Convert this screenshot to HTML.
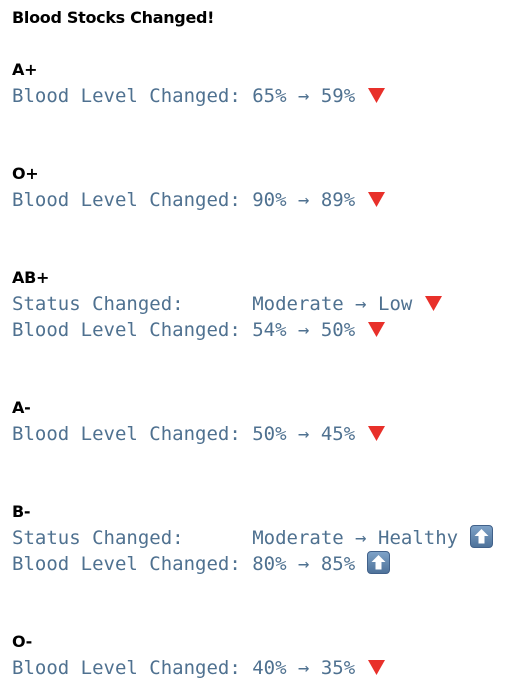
<!DOCTYPE html>
<html><head><style>
body{margin:0;background:#fff;width:512px;height:691px;overflow:hidden}
.w{position:absolute;left:12px;top:5px;line-height:26px}
.h{font-family:"DejaVu Sans","Liberation Sans",sans-serif;font-weight:bold;font-size:16px;color:#000;height:26px;white-space:pre;letter-spacing:-0.3px}
.m{font-family:"DejaVu Sans Mono",monospace;font-size:19px;color:#4f7190;height:26px;white-space:pre}
.b{height:26px}
.t{display:inline-block;width:19px;height:17px;vertical-align:-2px}
.u{display:inline-block;width:23px;height:23px;vertical-align:-4px}
</style></head><body>
<svg width="0" height="0" style="position:absolute"><defs><linearGradient id="g" x1="0" y1="0" x2="0" y2="1"><stop offset="0" stop-color="#7fa3c8"/><stop offset="1" stop-color="#4d7199"/></linearGradient></defs></svg>
<div class="w"><div class="h">Blood Stocks Changed!</div><div class="b"></div><div class="h">A+</div><div class="m">Blood Level Changed: 65% → 59% <svg class="t" viewBox="0 0 19 17"><path d="M1 1H18L9.5 16Z" fill="#e8302a"/></svg></div><div class="b"></div><div class="b"></div><div class="h">O+</div><div class="m">Blood Level Changed: 90% → 89% <svg class="t" viewBox="0 0 19 17"><path d="M1 1H18L9.5 16Z" fill="#e8302a"/></svg></div><div class="b"></div><div class="b"></div><div class="h">AB+</div><div class="m">Status Changed:      Moderate → Low <svg class="t" viewBox="0 0 19 17"><path d="M1 1H18L9.5 16Z" fill="#e8302a"/></svg></div><div class="m">Blood Level Changed: 54% → 50% <svg class="t" viewBox="0 0 19 17"><path d="M1 1H18L9.5 16Z" fill="#e8302a"/></svg></div><div class="b"></div><div class="b"></div><div class="h">A-</div><div class="m">Blood Level Changed: 50% → 45% <svg class="t" viewBox="0 0 19 17"><path d="M1 1H18L9.5 16Z" fill="#e8302a"/></svg></div><div class="b"></div><div class="b"></div><div class="h">B-</div><div class="m">Status Changed:      Moderate → Healthy <svg class="u" viewBox="0 0 23 23"><rect x="0.5" y="0.5" width="22" height="22" rx="3.5" fill="url(#g)" stroke="#41618a"/><path d="M11.5 4L18.5 11H14.5V18.5H8.5V11H4.5Z" fill="#fff"/></svg></div><div class="m">Blood Level Changed: 80% → 85% <svg class="u" viewBox="0 0 23 23"><rect x="0.5" y="0.5" width="22" height="22" rx="3.5" fill="url(#g)" stroke="#41618a"/><path d="M11.5 4L18.5 11H14.5V18.5H8.5V11H4.5Z" fill="#fff"/></svg></div><div class="b"></div><div class="b"></div><div class="h">O-</div><div class="m">Blood Level Changed: 40% → 35% <svg class="t" viewBox="0 0 19 17"><path d="M1 1H18L9.5 16Z" fill="#e8302a"/></svg></div></div>
</body></html>
